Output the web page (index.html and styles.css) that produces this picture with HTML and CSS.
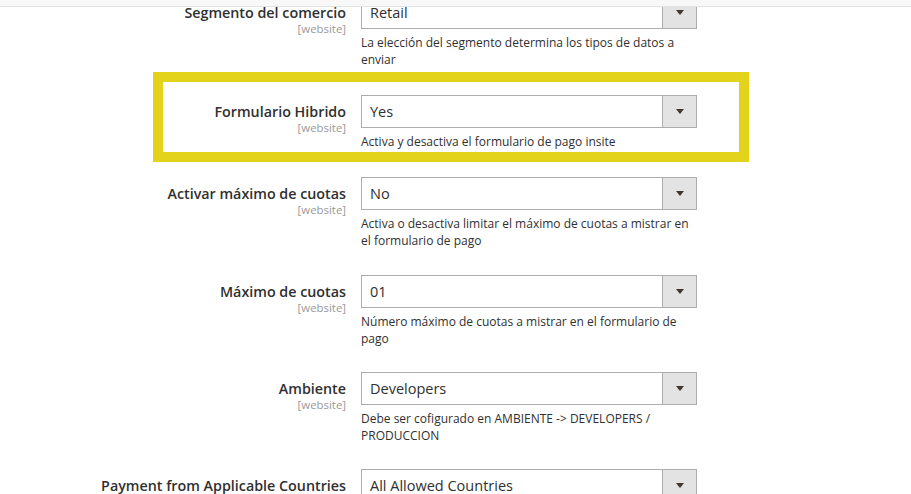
FILE: index.html
```html
<!DOCTYPE html>
<html lang="es">
<head>
<meta charset="utf-8">
<title>Configuración</title>
<link rel="stylesheet" href="styles.css">
</head>
<body>
<div class="topbar"></div>
<main class="form">
  <div class="row">
    <div class="label"><span class="label-text">Segmento del comercio</span><span class="scope">[website]</span></div>
    <div class="control">
      <div class="select"><span class="value">Retail</span><span class="arrow"><i class="tri"></i></span></div>
      <p class="note">La elección del segmento determina los tipos de datos a enviar</p>
    </div>
  </div>
  <div class="row row-highlight">
    <div class="highlight"></div>
    <div class="label"><span class="label-text">Formulario Hibrido</span><span class="scope">[website]</span></div>
    <div class="control">
      <div class="select"><span class="value">Yes</span><span class="arrow"><i class="tri"></i></span></div>
      <p class="note">Activa y desactiva el formulario de pago insite</p>
    </div>
  </div>
  <div class="row">
    <div class="label"><span class="label-text">Activar máximo de cuotas</span><span class="scope">[website]</span></div>
    <div class="control">
      <div class="select"><span class="value">No</span><span class="arrow"><i class="tri"></i></span></div>
      <p class="note">Activa o desactiva limitar el máximo de cuotas a mistrar en el formulario de pago</p>
    </div>
  </div>
  <div class="row">
    <div class="label"><span class="label-text">Máximo de cuotas</span><span class="scope">[website]</span></div>
    <div class="control">
      <div class="select"><span class="value">01</span><span class="arrow"><i class="tri"></i></span></div>
      <p class="note">Número máximo de cuotas a mistrar en el formulario de pago</p>
    </div>
  </div>
  <div class="row">
    <div class="label"><span class="label-text">Ambiente</span><span class="scope">[website]</span></div>
    <div class="control">
      <div class="select"><span class="value">Developers</span><span class="arrow"><i class="tri"></i></span></div>
      <p class="note">Debe ser cofigurado en AMBIENTE -&gt; DEVELOPERS / PRODUCCION</p>
    </div>
  </div>
  <div class="row">
    <div class="label"><span class="label-text">Payment from Applicable Countries</span></div>
    <div class="control">
      <div class="select"><span class="value">All Allowed Countries</span><span class="arrow"><i class="tri"></i></span></div>
    </div>
  </div>
</main>
</body>
</html>
```
FILE: styles.css
```css
* { box-sizing: border-box; }
html, body {
  margin: 0;
  padding: 0;
  background: #fff;
  overflow: hidden;
}
body {
  font-family: "Open Sans", "Liberation Sans", sans-serif;
  color: #303030;
  width: 911px;
  height: 494px;
}
.topbar {
  position: fixed;
  top: 0;
  left: 0;
  right: 0;
  height: 7px;
  background: #f8f8f8;
  border-bottom: 1px solid #e3e3e3;
  z-index: 5;
}
.form {
  display: flex;
  flex-direction: column;
  margin-top: -4px;
}
.row {
  position: relative;
  display: flex;
  align-items: flex-start;
  column-gap: 15px;
  margin-bottom: 25.2px;
}
.row-highlight {
  margin-top: 2px;
  margin-bottom: 27.2px;
}
.highlight {
  position: absolute;
  top: -23px;
  left: 153px;
  width: 596px;
  height: 90px;
  border: 10px solid #e3d31b;
  pointer-events: none;
}
.label {
  width: 346px;
  flex: none;
  display: flex;
  flex-direction: column;
  align-items: flex-end;
  padding-top: 7px;
  text-align: right;
}
.label-text {
  font-size: 14.3px;
  line-height: 19px;
  font-weight: 600;
  color: #303030;
}
.scope {
  font-size: 11.4px;
  line-height: 13px;
  color: #999;
}
.control {
  width: 336px;
  flex: none;
}
.select {
  display: flex;
  height: 33px;
  border: 1px solid #adadad;
  background: #fff;
}
.value {
  flex: 1;
  padding-left: 8px;
  font-size: 14.5px;
  line-height: 31px;
  color: #303030;
}
.arrow {
  width: 34px;
  flex: none;
  display: flex;
  align-items: center;
  justify-content: center;
  background: #e3e3e3;
  border-left: 1px solid #adadad;
}
.tri {
  display: block;
  width: 0;
  height: 0;
  border-left: 4px solid transparent;
  border-right: 4px solid transparent;
  border-top: 5px solid #41362f;
}
.note {
  margin: 5px 0 0;
  font-size: 12px;
  line-height: 17px;
  color: #303030;
}
```
